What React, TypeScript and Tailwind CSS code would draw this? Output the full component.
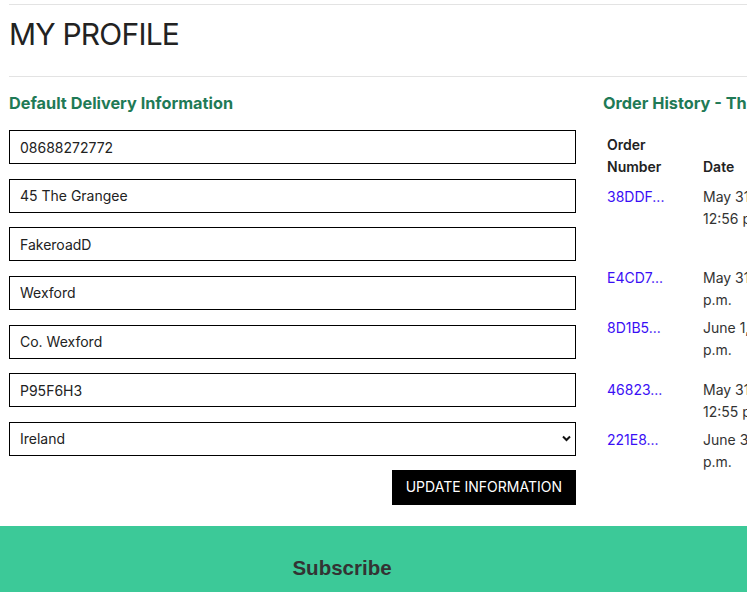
const fields = ["08688272772", "45 The Grangee", "FakeroadD", "Wexford", "Co. Wexford", "P95F6H3"];

const orders = [
  { id: "38DDF...", date: "May 31, 2021, 12:56 p.m.", h: "h-[81px]" },
  { id: "E4CD7...", date: "May 31, 2021, 1:05 p.m.", h: "h-[50px]" },
  { id: "8D1B5...", date: "June 1, 2021, 2:40 p.m.", h: "h-[62px]" },
  { id: "46823...", date: "May 31, 2021, 12:55 p.m.", h: "h-[50px]" },
  { id: "221E8...", date: "June 3, 2021, 9:14 p.m.", h: "h-[50px]" },
];

export default function App() {
  return (
    <div className="w-full min-h-[592px] overflow-hidden bg-white text-[#222] font-['Inter',sans-serif]">
      <div className="w-[1200px] pl-[9px] pt-[4px]">
        {/* page title */}
        <div className="border-t border-[#e3e3e3]" />
        <h1 className="mt-[11px] mb-[24px] text-[30px] leading-[36px] tracking-[-0.8px] text-[#222]">MY PROFILE</h1>
        <div className="border-t border-[#e3e3e3]" />

        <div className="mt-[14px] flex gap-[27px]">
          {/* delivery info */}
          <div className="w-[567px] shrink-0">
            <h2 className="text-[16.3px] leading-6 font-bold text-[#1f7a56]">Default Delivery Information</h2>
            <form className="mt-[15px] flex flex-col gap-[14.67px]">
              {fields.map((v) => (
                <input
                  key={v}
                  defaultValue={v}
                  className="h-[34px] w-full border border-black px-[10px] text-sm text-[#222] outline-none"
                />
              ))}
              <div className="relative">
                <select
                  defaultValue="IE"
                  className="h-[34px] w-full appearance-none border border-black bg-white px-[10px] text-sm text-[#222] outline-none"
                >
                  <option value="IE">Ireland</option>
                </select>
                <svg
                  className="pointer-events-none absolute right-[5px] top-[13px]"
                  width="9"
                  height="7"
                  viewBox="0 0 9 7"
                  fill="none"
                >
                  <path d="M1 1.5l3.5 3.5 3.5-3.5" stroke="#111" strokeWidth="2" />
                </svg>
              </div>
              <div className="flex justify-end -mt-[0.67px]">
                <button
                  type="button"
                  className="h-[35px] bg-black px-[14px] text-sm text-white"
                >
                  UPDATE INFORMATION
                </button>
              </div>
            </form>
          </div>

          {/* order history */}
          <div className="flex-1">
            <h2 className="text-[16.3px] leading-6 font-bold text-[#1f7a56] whitespace-nowrap">
              Order History - The Last Five Orders
            </h2>
            <table className="mt-[16px] text-sm leading-[22px] border-collapse">
              <thead>
                <tr className="h-[51px]">
                  <th className="w-[96px] px-[4px] pb-[4px] text-left align-bottom font-semibold text-[#222]">
                    Order
                    <br />
                    Number
                  </th>
                  <th className="w-[132px] px-[4px] pb-[4px] text-left align-bottom font-semibold text-[#222]">Date</th>
                </tr>
              </thead>
              <tbody>
                {orders.map((o) => (
                  <tr key={o.id} className={o.h}>
                    <td className="px-[4px] pt-[4px] align-top">
                      <a href="#" className="text-[#3a0ff5]">
                        {o.id}
                      </a>
                    </td>
                    <td className="w-[132px] px-[4px] pt-[4px] align-top text-[#333]">{o.date}</td>
                  </tr>
                ))}
              </tbody>
            </table>
          </div>
        </div>
      </div>

      {/* subscribe band */}
      <footer className="mt-[21px] h-[80px] bg-[#3cc998]">
        <div className="w-[684px] pt-[30px] text-center">
          <h3 className="text-[20.5px] leading-6 font-bold text-[#333] font-['Liberation_Sans',Arial,sans-serif]">
            Subscribe
          </h3>
        </div>
      </footer>
    </div>
  );
}
